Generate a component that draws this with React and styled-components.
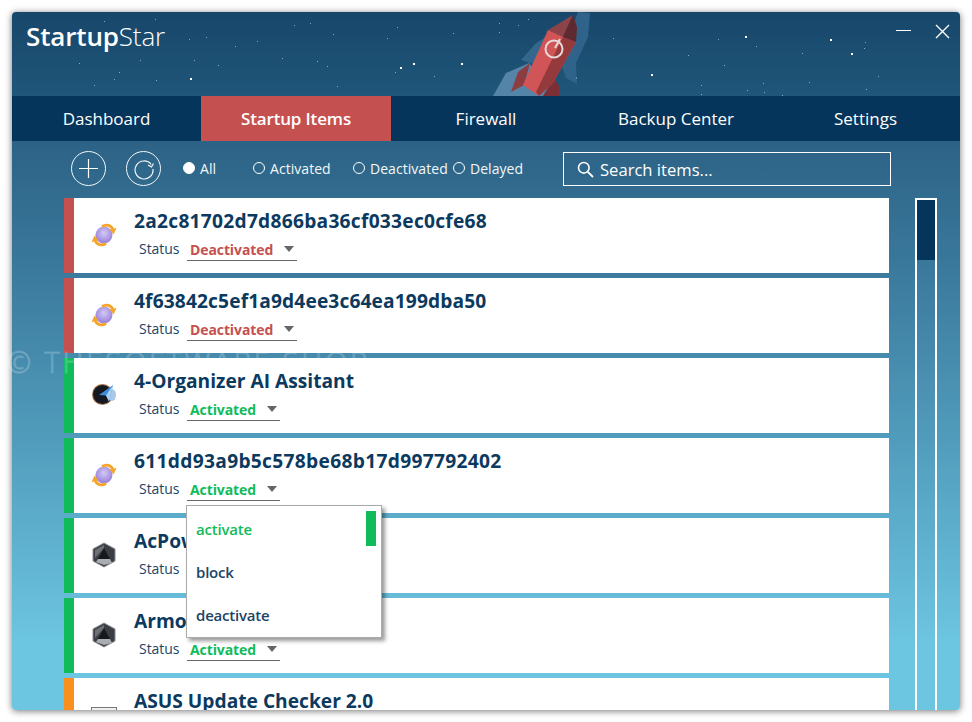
import React from "react";
import styled, { createGlobalStyle } from "styled-components";

const GlobalStyle = createGlobalStyle`
  html, body {
    margin: 0;
    padding: 0;
    background: #fff;
  }
  body {
    font-family: "Open Sans", "Noto Sans", sans-serif;
  }
`;

const Page = styled.div`
  width: 972px;
  height: 722px;
  padding: 12px;
  box-sizing: border-box;
  overflow: hidden;
  position: relative;
`;

const Win = styled.div`
  width: 948px;
  height: 698px;
  display: flex;
  flex-direction: column;
  border-radius: 4px;
  overflow: hidden;
  box-shadow: 0 1px 7px rgba(0, 0, 0, 0.55);
`;

const Header = styled.header`
  position: relative;
  height: 84px;
  flex: none;
  background: linear-gradient(#18476b, #1f5679);
`;

const Scene = styled.svg`
  position: absolute;
  left: 0;
  top: 0;
`;

const Logo = styled.div`
  position: absolute;
  left: 14px;
  top: 6px;
  font-size: 26px;
  line-height: 36px;
  color: #fff;
  font-weight: 300;
  letter-spacing: -0.15px;

  b {
    font-weight: 600;
  }
`;

const WinButtons = styled.div`
  position: absolute;
  right: 10px;
  top: 12px;
  display: flex;
  align-items: flex-start;
  gap: 24px;

  svg:first-child {
    margin-top: 6px;
  }
`;

const Nav = styled.nav`
  height: 45px;
  flex: none;
  display: grid;
  grid-template-columns: 189px 190px 190px 190px 189px;
  background: #06355b;
`;

const Tab = styled.div`
  display: flex;
  align-items: center;
  justify-content: center;
  font-size: 17px;
  font-weight: ${(props) => (props.$active ? 600 : 400)};
  letter-spacing: ${(props) => (props.$active ? "-0.15px" : "0")};
  color: #fff;
  background: ${(props) => (props.$active ? "#c55050" : "transparent")};
`;

const Content = styled.main`
  flex: 1;
  min-height: 0;
  display: flex;
  flex-direction: column;
  background: linear-gradient(#2c6285, #3c7c9f 25%, #6cc5e1 88%);
`;

const Toolbar = styled.div`
  height: 57px;
  flex: none;
  box-sizing: border-box;
  display: flex;
  align-items: center;
  padding: 0 0 2px 59px;
  color: #fff;
`;

const RoundButton = styled.div`
  width: 35px;
  height: 35px;
  margin-right: 20px;
  display: flex;
  align-items: center;
  justify-content: center;
  box-sizing: border-box;
  border: 1.5px solid #f2f6f8;
  border-radius: 50%;
`;

const Radios = styled.div`
  display: flex;
  margin-left: 2px;
`;

const Radio = styled.label`
  width: ${(props) => props.$width}px;
  display: flex;
  align-items: center;
  gap: 5px;
  font-size: 14px;
  letter-spacing: 0.05px;
  color: #f3f7f9;
`;

const RadioMark = styled.span`
  width: 12px;
  height: 12px;
  box-sizing: border-box;
  border-radius: 50%;
  border: 1px solid #fff;
  background: ${(props) => (props.$on ? "#fff" : "transparent")};
  margin-top: -1px;
`;

const SearchBox = styled.div`
  width: 328px;
  height: 34px;
  box-sizing: border-box;
  margin-left: 10px;
  margin-top: 1px;
  border: 1px solid #fff;
  padding-left: 13px;
  display: flex;
  align-items: center;
  gap: 6px;
  font-size: 16.6px;
`;

const Body = styled.div`
  flex: 1;
  min-height: 0;
  display: flex;
  align-items: stretch;
  padding-left: 52px;
  gap: 26px;
`;

const List = styled.div`
  width: 825px;
  display: flex;
  flex-direction: column;
  gap: 5px;
`;

const Row = styled.div`
  position: relative;
  height: 75px;
  flex: none;
  display: flex;
  background: #fff;
  border-left: 10px solid ${(props) => props.$color};
  box-sizing: border-box;
`;

const IconSlot = styled.div`
  width: 60px;
  flex: none;
  display: flex;
  justify-content: center;
  padding-top: 24px;
  box-sizing: border-box;
`;

const RowText = styled.div`
  display: flex;
  flex-direction: column;
`;

const Title = styled.div`
  font-size: 19.2px;
  line-height: 24px;
  margin-top: 11px;
  font-weight: 700;
  letter-spacing: ${(props) => props.$spacing || 0}px;
  color: #0c3a5e;
  white-space: nowrap;
`;

const StatusLine = styled.div`
  display: flex;
  align-items: flex-start;
  margin-top: 6px;
  padding-left: 5px;
`;

const StatusLabel = styled.span`
  font-size: 14px;
  line-height: 20px;
  width: 48px;
  letter-spacing: -0.05px;
  color: #1b4465;
`;

const Select = styled.div`
  position: relative;
  width: ${(props) => props.$width}px;
  height: 22px;
  box-sizing: border-box;
  border-bottom: 1px solid #666;
  padding-left: 3px;
  font-size: 14px;
  line-height: 21px;
  font-weight: 700;
  letter-spacing: -0.1px;
  color: ${(props) => props.$color};
`;

const Caret = styled.span`
  position: absolute;
  right: 3px;
  top: 7px;
  width: 0;
  height: 0;
  border-left: 5.5px solid transparent;
  border-right: 5.5px solid transparent;
  border-top: 6px solid #666;
`;

const Menu = styled.div`
  position: absolute;
  left: -1px;
  top: 26px;
  z-index: 5;
  width: 196px;
  height: 133px;
  box-sizing: border-box;
  padding-top: 2px;
  background: #fff;
  border: 1px solid #aaa;
  box-shadow: 3px 3px 4px rgba(0, 0, 0, 0.4);
`;

const MenuItem = styled.div`
  height: 43px;
  display: flex;
  align-items: center;
  padding-left: 9px;
  font-size: 15px;
  font-weight: 600;
  letter-spacing: -0.2px;
  color: ${(props) => (props.$active ? "#12bb5a" : "#1b4465")};
`;

const MenuMark = styled.span`
  position: absolute;
  left: 179px;
  top: 5px;
  width: 10px;
  height: 35px;
  background: #12bb5a;
`;

const Track = styled.div`
  width: 22px;
  flex: none;
  box-sizing: border-box;
  border: 2px solid #fff;
  border-bottom: none;
`;

const Thumb = styled.div`
  height: 60px;
  background: #06355b;
`;

const Watermark = styled.div`
  position: absolute;
  left: 7px;
  top: 346px;
  font-size: 29px;
  line-height: 32px;
  letter-spacing: 2.9px;
  color: rgba(255, 255, 255, 0.08);
  -webkit-text-stroke: 1px rgba(255, 255, 255, 0.2);
  font-weight: 300;
  white-space: nowrap;
  pointer-events: none;
  z-index: 3;
`;

const RED = "#c55050";
const GREEN = "#12bb5a";
const ORANGE = "#fb8f1e";

const faint = [
  [104, 21], [155, 19], [294, 25], [310, 23], [397, 27], [333, 34], [453, 33], [189, 39], [206, 37],
  [257, 41], [235, 46], [387, 38], [79, 63], [140, 60], [194, 60], [218, 65], [282, 58], [317, 61],
  [327, 66], [395, 72], [119, 72], [114, 79], [156, 80], [94, 85], [337, 86], [434, 76],
  [499, 23], [518, 25], [499, 32], [528, 19], [613, 38], [718, 39], [756, 46], [865, 42], [864, 48],
  [802, 53], [688, 55], [724, 65], [763, 83], [809, 82], [701, 85], [747, 90], [764, 92], [866, 89],
  [701, 94], [782, 95], [878, 76],
];
const bright = [
  [400, 67], [413, 63], [461, 63], [190, 78], [745, 36], [830, 39], [851, 53], [651, 74], [575, 77],
];

const HeaderScene = () => (
  <Scene width="948" height="84" viewBox="12 12 948 84">
    {faint.map(([x, y]) => (
      <rect key={`${x}-${y}`} x={x} y={y} width="1" height="1" fill="#c9dbe6" opacity="0.65" />
    ))}
    {bright.map(([x, y]) => (
      <rect key={`${x}-${y}`} x={x} y={y} width="2" height="2" fill="#fff" />
    ))}
    <polygon points="578,12 590,13 588,37 576,63 577,84 566,78 560,60" fill="#2f6389" />
    <polygon points="521,60 536,43 548,36 540,66" fill="#33678d" />
    <polygon points="493,96 506,73 529,63 559,96" fill="#5485a8" />
    <polygon points="511,92 518,72 530,63 524,85" fill="#8d3d40" />
    <polygon points="543,96 554,78 559,86 559,96" fill="#7c3035" />
    <polygon points="548,30 576,42 553,83 539,96 523,85" fill="#d15557" />
    <polygon points="576,42 563,37 536,92 539,96 553,83" fill="#94393c" />
    <polygon points="573,15 548,30 563,37" fill="#8d4347" />
    <polygon points="573,15 563,37 576,42 577,27" fill="#5e2a2f" />
    <circle cx="554" cy="49" r="8.5" fill="none" stroke="#e6d8d8" strokeWidth="2" />
    <line x1="555" y1="48" x2="560" y2="39" stroke="#e6d8d8" strokeWidth="2" />
  </Scene>
);

const OrbitIcon = () => (
  <svg width="26" height="26" viewBox="0 0 26 26">
    <defs>
      <radialGradient id="orbit-ball" cx="0.45" cy="0.4" r="0.65">
        <stop offset="0" stopColor="#d3c8f4" />
        <stop offset="1" stopColor="#9379d8" />
      </radialGradient>
    </defs>
    <ellipse cx="13" cy="13" rx="8.5" ry="8.5" fill="url(#orbit-ball)" transform="rotate(25 13 13)" />
    <path d="M11 4.5C15 2 20.5 3 22 8" stroke="#f5a52a" strokeWidth="2.8" fill="none" />
    <polygon points="25.5,6 18.5,7.5 22.5,12.5" fill="#f5a52a" />
    <path d="M15 21.5C11 24 5.5 23 4 18" stroke="#f5a52a" strokeWidth="2.8" fill="none" />
    <polygon points="0.5,20 7.5,18.5 3.5,13.5" fill="#f5a52a" />
  </svg>
);

const PlaneIcon = () => (
  <svg width="26" height="26" viewBox="0 0 26 26">
    <circle cx="11.5" cy="12.5" r="10.5" fill="#a07350" />
    <circle cx="11.5" cy="12.5" r="9.5" fill="#15181f" />
    <ellipse cx="21" cy="13" rx="4" ry="6" fill="#a9c8ea" />
    <path d="M22 3 8 13l7 .5 3 6z" fill="#3f8ede" />
    <path d="M22 3 15 13.5l3 6z" fill="#a9d2f2" />
  </svg>
);

const GemIcon = () => (
  <svg width="24" height="26" viewBox="0 0 24 26">
    <polygon points="12,1 23,7 23,19 12,25 1,19 1,7" fill="#3b3f45" />
    <polygon points="12,1 23,7 23,19 12,25 1,19 1,7" fill="none" stroke="#8a8d92" />
    <polygon points="12,6 18,17 6,17" fill="#16181c" />
    <polygon points="6,17 18,17 20,21 12,23 4,20" fill="#a9acb0" />
    <polygon points="12,3 3,8 3,16 12,6" fill="#6d7176" />
  </svg>
);

const AppWindowIcon = () => (
  <svg width="26" height="30" viewBox="0 0 26 30">
    <rect x="0.5" y="5.5" width="25" height="22" fill="#f1f1f1" stroke="#777" />
    <rect x="3" y="8" width="20" height="3" fill="#4a8fd8" />
  </svg>
);

const items = [
  { name: "2a2c81702d7d866ba36cf033ec0cfe68", spacing: 0.25, stripe: RED, status: "Deactivated", color: RED, width: 110, icon: <OrbitIcon /> },
  { name: "4f63842c5ef1a9d4ee3c64ea199dba50", spacing: 0.12, stripe: RED, status: "Deactivated", color: RED, width: 110, icon: <OrbitIcon /> },
  { name: "4-Organizer AI Assitant", stripe: GREEN, status: "Activated", color: GREEN, width: 93, icon: <PlaneIcon /> },
  { name: "611dd93a9b5c578be68b17d997792402", spacing: 0.3, stripe: GREEN, status: "Activated", color: GREEN, width: 93, icon: <OrbitIcon />, open: true },
  { name: "AcPowerNotification", stripe: GREEN, status: "Activated", color: GREEN, width: 93, icon: <GemIcon /> },
  { name: "Armoury Crate", stripe: GREEN, status: "Activated", color: GREEN, width: 93, icon: <GemIcon /> },
  { name: "ASUS Update Checker 2.0", stripe: ORANGE, status: "Delayed", color: ORANGE, width: 93, icon: <AppWindowIcon /> },
];

const App = () => {
  return (
    <Page>
      <GlobalStyle />
      <Win>
        <Header>
          <HeaderScene />
          <Logo>
            <b>Startup</b>Star
          </Logo>
          <WinButtons>
            <svg width="15" height="2" viewBox="0 0 15 2">
              <rect width="15" height="1" fill="#fff" />
            </svg>
            <svg width="15" height="15" viewBox="0 0 15 15">
              <path d="M1 1l13 13M14 1 1 14" stroke="#fff" strokeWidth="1.4" fill="none" />
            </svg>
          </WinButtons>
        </Header>
        <Nav>
          <Tab>Dashboard</Tab>
          <Tab $active>Startup Items</Tab>
          <Tab>Firewall</Tab>
          <Tab>Backup Center</Tab>
          <Tab>Settings</Tab>
        </Nav>
        <Content>
          <Toolbar>
            <RoundButton>
              <svg width="19" height="19" viewBox="0 0 19 19">
                <path d="M9.5 0v19M0 9.5h19" stroke="#fff" strokeWidth="1.2" />
              </svg>
            </RoundButton>
            <RoundButton>
              <svg width="22" height="22" viewBox="0 0 22 22">
                <path d="M18.2 6.5A9 9 0 1 0 20 11" stroke="#f2f6f8" strokeWidth="1.2" fill="none" />
                <path d="M20.5 5.5 18.5 9 15 7" stroke="#f2f6f8" strokeWidth="1.2" fill="none" />
              </svg>
            </RoundButton>
            <Radios>
              <Radio $width={70}><RadioMark $on />All</Radio>
              <Radio $width={100}><RadioMark />Activated</Radio>
              <Radio $width={100}><RadioMark />Deactivated</Radio>
              <Radio $width={100}><RadioMark />Delayed</Radio>
            </Radios>
            <SearchBox>
              <svg width="17" height="17" viewBox="0 0 17 17">
                <circle cx="6.8" cy="6.8" r="5.3" fill="none" stroke="#fff" strokeWidth="1.6" />
                <path d="M10.8 10.8 16 16" stroke="#fff" strokeWidth="1.8" />
              </svg>
              Search items...
            </SearchBox>
          </Toolbar>
          <Body>
            <List>
              {items.map((item) => (
                <Row key={item.name} $color={item.stripe}>
                  <IconSlot>{item.icon}</IconSlot>
                  <RowText>
                    <Title $spacing={item.spacing}>{item.name}</Title>
                    <StatusLine>
                      <StatusLabel>Status</StatusLabel>
                      <Select $width={item.width} $color={item.color}>
                        {item.status}
                        <Caret />
                        {item.open && (
                          <Menu>
                            <MenuMark />
                            <MenuItem $active>activate</MenuItem>
                            <MenuItem>block</MenuItem>
                            <MenuItem>deactivate</MenuItem>
                          </Menu>
                        )}
                      </Select>
                    </StatusLine>
                  </RowText>
                </Row>
              ))}
            </List>
            <Track>
              <Thumb />
            </Track>
          </Body>
        </Content>
      </Win>
      <Watermark>© THESOFTWARE.SHOP</Watermark>
    </Page>
  );
};

export default App;
